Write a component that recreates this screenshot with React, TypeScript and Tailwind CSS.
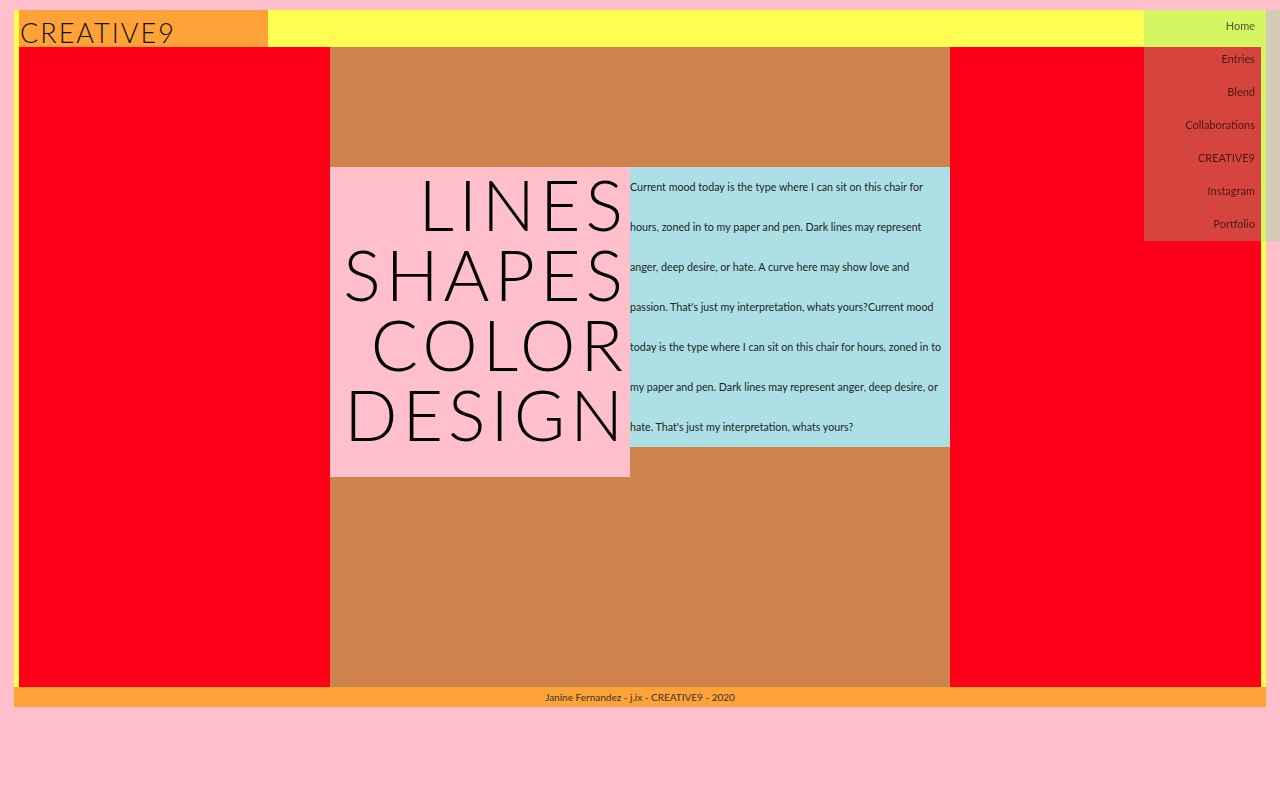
const NAV = ['Home', 'Entries', 'Blend', 'Collaborations', 'CREATIVE9', 'Instagram', 'Portfolio']

// line breaks kept as in the original layout
const LINES = [
  'Current mood today is the type where I can sit on this chair for',
  'hours, zoned in to my paper and pen. Dark lines may represent',
  'anger, deep desire, or hate. A curve here may show love and',
  "passion. That's just my interpretation, whats yours?Current mood",
  'today is the type where I can sit on this chair for hours, zoned in to',
  'my paper and pen. Dark lines may represent anger, deep desire, or',
  "hate. That's just my interpretation, whats yours?",
]

export default function App() {
  return (
    <div className="min-h-screen bg-[#ffc0cb] px-[14px] pt-[10px] font-['Lato','Open_Sans',sans-serif] text-black">
      <div className="bg-[#ffff52] px-[5px]">
        {/* header */}
        <header className="flex h-[37px]">
          <div className="flex w-[249px] items-end bg-[#ffa238] pb-[1px] pl-[1px]">
            <span className="text-[27px] font-light leading-none tracking-[2px] text-[#111]">CREATIVE9</span>
          </div>
        </header>

        {/* main */}
        <main className="flex h-[640px]">
          <div className="w-[311px] bg-[#ff001b]" />
          <div className="flex flex-1 items-start bg-[#cf834c] pt-[120px]">
            <div className="flex h-[310px] w-[300px] flex-col items-end bg-[#ffc0cb] pr-[7px] pt-[2px]">
              {['LINES', 'SHAPES', 'COLOR', 'DESIGN'].map((w) => (
                <span key={w} className="mr-[-5px] h-[70px] text-[70px] font-light leading-[70px] tracking-[5px]">
                  {w}
                </span>
              ))}
            </div>
            <div className="w-[320px] bg-[#ade0e5]">
              <p className="whitespace-nowrap text-[10.7px] leading-[40px] text-[#222]">
                {LINES.map((l, i) => (
                  <span key={i} className="block">
                    {l}
                  </span>
                ))}
              </p>
            </div>
          </div>
          <div className="w-[311px] bg-[#ff001b]" />
        </main>
      </div>

      {/* footer */}
      <footer className="flex h-[20px] items-center justify-center bg-[#ffa238] text-[10px] text-[#333]">
        Janine Fernandez - j.ix - CREATIVE9 - 2020
      </footer>

      {/* nav overlay */}
      <nav className="fixed right-0 top-[10px] w-[136px] bg-[rgba(120,222,140,0.31)]">
        {NAV.map((n) => (
          <div key={n} className="flex h-[33px] items-center justify-end pr-[25px] text-[11px] text-black/65">
            {n}
          </div>
        ))}
      </nav>
    </div>
  )
}
